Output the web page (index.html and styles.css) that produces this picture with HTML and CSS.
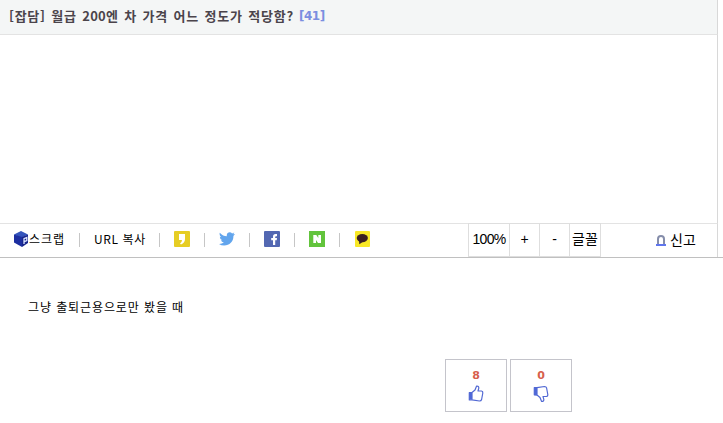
FILE: index.html
```html
<!DOCTYPE html>
<html lang="ko">
<head>
<meta charset="utf-8">
<title>월급 200엔 차 가격 어느 정도가 적당함?</title>
<link rel="stylesheet" href="styles.css">
</head>
<body>
<article class="post">
  <header class="title"><h1>[잡담] 월급 <span class="num">200</span>엔 차 가격 어느 정도가 적당함?</h1><span class="count">[41]</span></header>
  <div class="info"></div>
  <nav class="toolbar">
    <ul class="share">
      <li class="scrap">
        <svg width="15" height="16" viewBox="0 0 15 16"><path d="M7 0 14 3.5 7 7 0 3.5Z" fill="#3454bc"/><path d="M0 3.5 8 6V16L0 11.5Z" fill="#1c2ea0"/><path d="M8 6 14 3.5V12L8 16Z" fill="#17258a"/><path d="M10 13V7.7L12.8 6.5V9.6L10.3 10.7" fill="none" stroke="#dce4ff" stroke-width="1.3"/></svg><span>스크랩</span>
      </li>
      <li class="url"><span>URL 복사</span></li>
      <li><svg width="16" height="16" viewBox="0 0 16 16"><rect width="16" height="16" rx="1" fill="#e6cd24"/><path d="M5 3H11V8Q11 11.5 7 13.5L6 12.5Q8 11 8 9H5Z" fill="#fff"/></svg></li>
      <li><svg width="16" height="16" viewBox="0 0 16 16"><path d="M.8 1.7Q4 5.2 7.8 5.2C7.3 1.6 11 .2 13.1 2.4L15.3 1.5 14.3 3.3 16 3 14.4 4.9C14.7 10 10.8 14.5 5.2 14.5Q2.3 14.5 0 13Q2.8 13.1 4.9 11.6Q2.6 11.3 1.9 9.3H3.4Q.8 8.5.8 5.8L2.3 6.3Q-.1 4.3.8 1.7Z" fill="#62a5ed"/></svg></li>
      <li><svg width="16" height="16" viewBox="0 0 16 16"><rect width="16" height="16" rx="1" fill="#5368b2"/><path d="M9 14V9.2H7.2V7H9V5.6Q9 3 11.5 3H13V5.2H12Q11.2 5.2 11.2 6V7H13L12.7 9.2H11.2V14Z" fill="#fff"/></svg></li>
      <li><svg width="16" height="16" viewBox="0 0 16 16"><rect width="16" height="16" fill="#62c43c"/><path d="M4.3 4H7.3L9.3 7V4H12V12H9L7 9V12H4.3Z" fill="#fff"/></svg></li>
      <li class="talk"><svg width="15" height="16" viewBox="0 0 15 16"><rect width="15" height="16" rx="1" fill="#f8e826"/><ellipse cx="7.3" cy="7.1" rx="5.6" ry="4.2" fill="#3b2022"/><path d="M4 9.5 4.3 13.2 8 10.8Z" fill="#3b2022"/></svg></li>
    </ul>
    <div class="fonts">
      <button class="size">100%</button><button>+</button><button>-</button><button class="face">글꼴</button>
    </div>
    <a class="report"><svg width="10" height="11" viewBox="0 0 10 11"><path d="M2 10V4Q2 1 5 1T8 4V10" fill="none" stroke="#858daa" stroke-width="2"/><path d="M0 9H10V11H0Z" fill="#6076ed"/></svg><span>신고</span></a>
  </nav>
  <p class="content">그냥 출퇴근용으로만 봤을 때</p>
  <div class="votes">
    <button class="vote"><b>8</b><svg width="16" height="17" viewBox="0 0 16 17"><path d="M1.2 7.5 4 7V14.5L1.2 15Z" fill="#4e68d9"/><path d="M4 7.5 7 5 8.5 1.2Q11 .8 10.8 3.2L10 6H13.5Q15 6.3 14.8 8L13.6 14.5Q13.2 16 11.5 16L4 14.8 1.3 15V7.7L4 7.5V14.8" fill="none" stroke="#5269d4" stroke-width="1.2" stroke-linejoin="round"/></svg></button>
    <button class="vote down"><b>0</b><svg width="16" height="17" viewBox="0 0 16 17"><g transform="matrix(1 0 0 -1 0 17.5)"><path d="M1.2 7.5 4 7V14.5L1.2 15Z" fill="#4e68d9"/><path d="M4 7.5 7 5 8.5 1.2Q11 .8 10.8 3.2L10 6H13.5Q15 6.3 14.8 8L13.6 14.5Q13.2 16 11.5 16L4 14.8 1.3 15V7.7L4 7.5V14.8" fill="none" stroke="#5269d4" stroke-width="1.2" stroke-linejoin="round"/></g></svg></button>
  </div>
</article>
</body>
</html>
```
FILE: styles.css
```css
* { box-sizing: border-box; }
body { margin: 0; background: #fff; color: #000; font: 13px/16px "Liberation Sans", "Noto Sans CJK KR", sans-serif; overflow: hidden; }
svg { display: block; flex: none; }
.title { display: flex; align-items: center; width: 718px; height: 35px; padding: 0 0 3px 9px; background: #f4f6f6; border-bottom: 1px solid #e3e3e3; border-right: 1px solid #d8d8d8; white-space: nowrap; }
.title h1 { margin: 0; width: 290px; font: bold 13px/16px "Noto Sans CJK KR", sans-serif; letter-spacing: .75px; word-spacing: 1.2px; color: #4b444b; }
.title .num { letter-spacing: .2px; }
.count { font: bold 12px/16px "DejaVu Sans", sans-serif; letter-spacing: -.5px; color: #7b8ee0; }
.info { width: 718px; height: 188px; border-right: 1px solid #d8d8d8; }
.toolbar { display: flex; height: 35px; border-bottom: 1px solid #c0c0c0; }
.share { display: flex; align-items: center; flex: none; width: 468px; margin: 0; padding: 0 0 3px 14px; list-style: none; border-top: 1px solid #e3e3e3; font: 12px/16px "Noto Sans CJK KR", sans-serif; letter-spacing: .6px; }
.share li { display: flex; align-items: center; width: 45px; height: 16px; white-space: nowrap; }
.share li:not(:last-child)::after { content: ""; align-self: flex-start; flex: none; width: 1px; height: 14px; margin: 2px 14px 0 auto; background: #c6c6c6; }
.share .scrap { width: 80px; letter-spacing: 1px; }
.share .url { width: 80px; }
.share .talk { padding-left: 1px; }
.fonts { display: flex; flex: none; height: 34px; border: solid #dedede; border-width: 1px 0 1px 1px; }
.fonts button { width: 30px; padding: 0 0 1px; border: 0; border-right: 1px solid #dedede; background: #fff; color: #000; font: 14px/31px "Liberation Sans", "Noto Sans CJK KR", sans-serif; white-space: nowrap; }
.fonts .size { width: 41px; letter-spacing: -.7px; }
.fonts .face { width: 31px; line-height: 29px; }
.report { display: flex; align-items: center; width: 117px; padding: 0 0 4px 55px; gap: 4px; border-top: 1px solid #e3e3e3; border-right: 1px solid #d8d8d8; font: 14px/16px "Noto Sans CJK KR", sans-serif; white-space: nowrap; }
.report svg { margin-top: 3px; }
.content { margin: 41px 0 0 28px; font: 12px/16px "Noto Sans CJK KR", sans-serif; letter-spacing: .9px; }
.votes { display: flex; gap: 3px; margin: 44px 0 0 445px; }
.vote { display: flex; flex-direction: column; align-items: center; width: 62px; height: 53px; padding: 8px 0 0; border: 1px solid #c4c4cb; background: #fff; }
.vote b { font: bold 11px/16px "DejaVu Sans", sans-serif; color: #d7604c; }
.vote svg { margin-top: 1px; }
```
